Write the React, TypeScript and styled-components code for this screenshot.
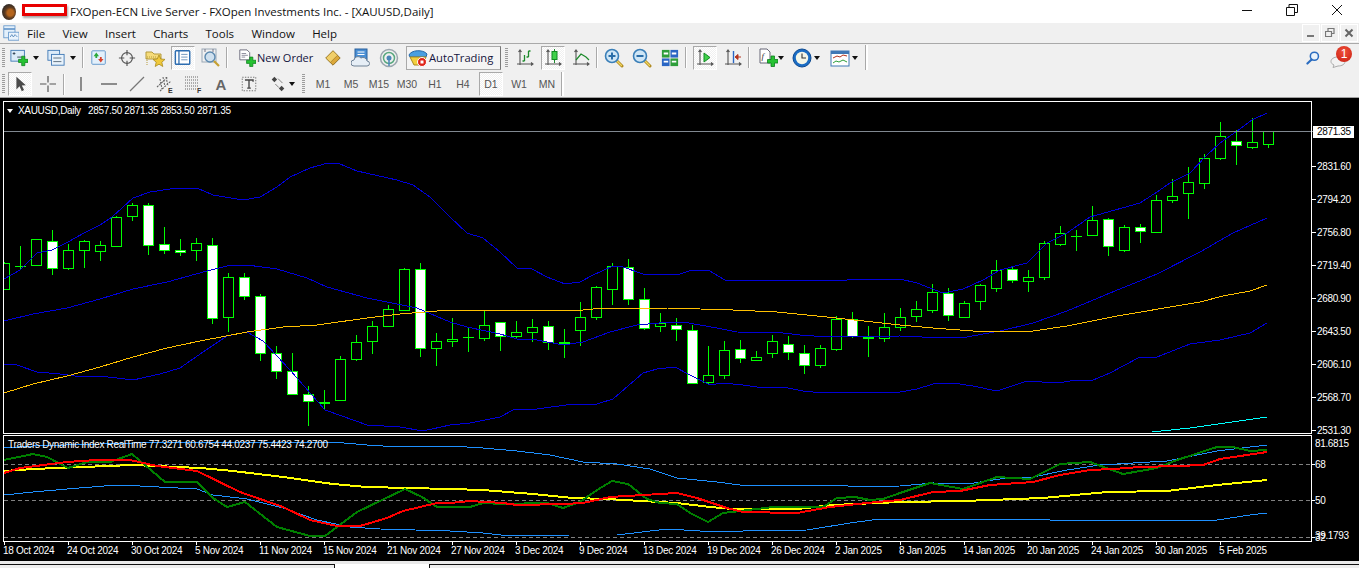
import React from "react";
import styled, { createGlobalStyle } from "styled-components";

const GlobalStyle = createGlobalStyle`
  html, body {
    margin: 0;
    padding: 0;
    overflow: hidden;
    background: #000;
  }
  #root {
    height: 100vh;
  }
`;

/* top, bottom, wick top, wick bottom, white body */
type Candle = [number, number, number, number, boolean];

const CANDLES: Candle[] = [
  [263, 289, 262, 289, false], [266, 266, 246, 269, false], [239, 265, 239, 265, false], [241, 268, 230, 275, true],
  [250, 268, 244, 270, false], [241, 250, 240, 268, false], [245, 251, 241, 261, false], [217, 246, 216, 247, false],
  [205, 216, 203, 221, false], [205, 245, 203, 255, true], [244, 250, 227, 254, true], [250, 252, 239, 256, true],
  [243, 250, 238, 261, false], [245, 318, 238, 324, true], [277, 317, 273, 332, false], [277, 296, 273, 300, true],
  [296, 353, 294, 361, true], [353, 371, 346, 379, true], [371, 394, 353, 394, true], [394, 401, 386, 426, true],
  [402, 402, 390, 410, false], [359, 400, 356, 400, false], [342, 359, 335, 361, false], [326, 341, 321, 354, false],
  [309, 326, 305, 326, false], [269, 310, 268, 311, false], [269, 348, 263, 357, true], [341, 348, 333, 366, false],
  [339, 341, 318, 347, false], [337, 337, 327, 352, false], [325, 338, 311, 341, false], [322, 336, 322, 351, true],
  [332, 336, 321, 339, false], [327, 332, 319, 342, false], [326, 342, 321, 350, true], [342, 342, 329, 358, false],
  [317, 330, 302, 346, false], [287, 317, 286, 320, false], [266, 289, 263, 305, false], [267, 299, 259, 305, true],
  [299, 328, 288, 330, true], [323, 326, 313, 332, false], [325, 329, 318, 341, true], [330, 383, 325, 383, true],
  [375, 382, 346, 385, false], [350, 375, 341, 379, false], [349, 358, 340, 363, true], [357, 360, 351, 361, false],
  [341, 353, 335, 358, false], [344, 352, 336, 360, true], [353, 365, 345, 374, true], [348, 365, 345, 368, false],
  [319, 349, 316, 351, false], [319, 336, 312, 338, true], [337, 338, 326, 357, true], [327, 338, 313, 342, false],
  [317, 327, 308, 331, false], [309, 316, 301, 322, false], [292, 310, 284, 313, false], [293, 315, 288, 321, true],
  [303, 317, 301, 318, false], [285, 301, 284, 310, false], [270, 288, 260, 292, false], [269, 280, 267, 283, true],
  [277, 281, 270, 292, false], [243, 277, 241, 280, false], [233, 244, 226, 246, false], [236, 236, 230, 251, false],
  [220, 235, 206, 235, false], [219, 246, 218, 256, true], [227, 250, 225, 252, false], [227, 231, 224, 243, true],
  [200, 232, 195, 232, false], [196, 200, 179, 203, false], [182, 193, 167, 219, false], [158, 183, 154, 189, false],
  [136, 158, 122, 160, false], [141, 145, 130, 165, true], [142, 147, 118, 149, false], [131, 144, 131, 148, false],
];

const UPPER_BAND =
  "4,279 20,270 37,253 52,250 68,242 84,233 100,225 112,217 133,198 150,192 177,188 197,188 213,195 243,200 260,197 277,187 290,177 310,168 328,163 340,164 357,171 397,180 413,185 430,197 450,217 467,233 483,238 500,252 517,268 532,269 547,277 565,284 580,282 593,275 613,266 623,267 643,274 677,275 692,270 708,270 725,280 747,280 780,280 827,280 847,280 877,279 900,279 917,283 943,293 963,289 983,280 1000,270 1027,263 1047,243 1067,233 1090,217 1140,203 1157,192 1170,183 1190,173 1207,155 1220,143 1237,131 1252,120 1267,113";
const MIDDLE_BAND =
  "4,321 33,314 67,308 100,299 133,289 167,282 207,271 227,266 247,265 277,269 307,278 327,287 367,298 417,308 450,322 467,327 500,334 517,339 537,340 563,345 583,342 610,332 637,325 670,322 683,322 717,328 737,332 783,333 800,335 827,337 900,336 943,338 967,337 1000,331 1033,323 1067,311 1110,293 1157,274 1200,252 1233,233 1267,218";
const LOWER_BAND =
  "4,364 17,365 37,372 60,374 83,377 100,376 133,380 160,374 180,368 203,352 227,336 247,332 263,341 290,370 325,410 367,425 400,427 423,431 450,425 470,423 500,417 515,409 537,409 573,404 597,404 613,399 643,373 657,369 675,367 690,375 710,385 723,383 743,385 757,387 783,387 803,391 813,392 877,392 900,392 917,389 933,384 953,383 973,386 997,391 1027,381 1057,383 1077,380 1093,380 1110,373 1140,357 1157,357 1190,344 1220,340 1250,333 1267,323";
const SLOW_MA =
  "4,393 33,384 67,376 100,367 133,357 167,348 200,341 247,332 283,327 317,325 367,318 400,314 450,310 540,310 583,310 603,308 667,308 733,310 777,312 827,317 900,325 933,328 973,331 1033,331 1067,326 1117,316 1200,302 1223,296 1250,291 1267,285";
const CYAN_LINE = "1152,432 1190,428 1267,417";

const TDI_TOP =
  "4,448 33,446 167,442 333,442 367,445 383,446 450,446 483,448 517,451 550,455 583,462 617,464 650,469 677,478 717,482 740,485 833,485 863,487 900,486 933,483 967,484 1000,479 1033,477 1067,470 1100,465 1167,461 1217,451 1267,445";
const TDI_BOTTOM =
  "4,495 33,492 67,489 117,485 140,486 197,489 213,495 247,499 283,508 317,520 350,527 380,529 450,531 483,533 510,536 570,535 617,535 667,529 700,531 743,531 807,530 850,523 880,519 900,519 957,519 1050,520 1217,520 1250,515 1267,513";
const TDI_YELLOW =
  "4,471 33,469 83,467 133,465 200,468 233,471 283,477 333,484 367,487 450,489 483,490 533,494 573,498 607,499 677,503 710,507 733,509 797,509 833,505 900,502 963,501 1043,498 1107,492 1167,491 1217,485 1267,480";
const TDI_RED =
  "4,473 20,468 67,462 97,460 130,460 157,466 197,471 240,492 283,507 310,520 337,526 360,526 387,518 403,511 437,503 450,503 470,501 503,503 517,505 563,504 583,503 610,497 660,494 677,493 697,498 727,508 743,512 797,513 830,507 867,503 900,500 933,492 960,491 990,485 1033,482 1060,475 1090,470 1113,469 1140,467 1177,466 1203,465 1220,459 1267,452";
const TDI_GREEN =
  "4,460 33,454 47,457 68,468 87,462 110,462 132,454 165,482 197,482 213,498 227,507 245,502 277,527 310,536 325,536 357,512 405,489 422,497 437,507 470,507 483,503 503,504 547,503 563,508 580,502 597,490 612,481 628,484 647,499 660,503 677,504 690,513 708,522 723,513 740,511 773,507 823,507 837,498 855,497 870,500 883,499 900,493 930,483 963,489 997,477 1030,479 1060,464 1090,462 1123,474 1157,468 1177,460 1217,447 1233,447 1250,451 1267,450";

const PRICE_LABELS = [
  ["2831.60", 166], ["2794.20", 199], ["2756.80", 232], ["2719.40", 265], ["2680.90", 298],
  ["2643.50", 331], ["2606.10", 364], ["2568.70", 397], ["2531.30", 430],
] as const;

const DATES = [
  "18 Oct 2024", "24 Oct 2024", "30 Oct 2024", "5 Nov 2024", "11 Nov 2024", "15 Nov 2024", "21 Nov 2024",
  "27 Nov 2024", "3 Dec 2024", "9 Dec 2024", "13 Dec 2024", "19 Dec 2024", "26 Dec 2024", "2 Jan 2025",
  "8 Jan 2025", "14 Jan 2025", "20 Jan 2025", "24 Jan 2025", "30 Jan 2025", "5 Feb 2025",
];

const MENU = ["File", "View", "Insert", "Charts", "Tools", "Window", "Help"];
const PERIODS = ["M1", "M5", "M15", "M30", "H1", "H4", "D1", "W1", "MN"];

const Window = styled.div`
  height: 100vh;
  display: flex;
  flex-direction: column;
  font-family: "Open Sans", "Noto Sans", sans-serif;
  background: #f0f0f0;
`;

const TitleBar = styled.div`
  height: 23px;
  flex: none;
  display: flex;
  align-items: center;
  background: #fff;
  font-size: 11.5px;
  color: #111;
`;

const AppLogo = styled.div`
  width: 14px;
  height: 16px;
  margin: 0 6px 0 2px;
  border-radius: 50%;
  background: radial-gradient(circle at 60% 55%, #b5651d 0 25%, #5b3a20 45%, #2e2a28 75%);
`;

const HiddenName = styled.div`
  width: 39px;
  height: 6px;
  margin-right: 3px;
  margin-top: -3px;
  background: #fff;
  border: 3px solid #e80000;
  box-shadow: 1px 2px 2px rgba(0, 0, 0, 0.35);
`;

const TitleText = styled.span`
  flex: 1;
`;

const CaptionButton = styled.div`
  width: 45px;
  height: 23px;
  margin-top: -3px;
  display: flex;
  align-items: center;
  justify-content: center;
`;

const MenuBar = styled.div`
  height: 20px;
  flex: none;
  display: flex;
  align-items: center;
  gap: 17.3px;
  font-size: 11.5px;
  color: #111;
  background: #f0f0f0;
`;

const MenuIcon = styled.div`
  width: 18px;
  height: 16px;
  margin: 0 -11.3px 0 3px;
`;

const MdiButtons = styled.div`
  margin-left: auto;
  display: flex;
  gap: 1px;
  padding-right: 1px;
`;

const MdiButton = styled.div`
  width: 16px;
  height: 16px;
  display: flex;
  align-items: center;
  justify-content: center;
  background: #f0f0f0;
  border: 1px solid #fff;
`;

const ToolRow = styled.div<{ $top?: boolean }>`
  height: ${(p) => (p.$top ? 28 : 26)}px;
  flex: none;
  display: flex;
  align-items: center;
  box-sizing: border-box;
  background: #f0f0f0;
  border-top: ${(p) => (p.$top ? "1px solid #a9a9a9" : "none")};
`;

const BarEnd = styled.div`
  align-self: stretch;
  width: 2px;
  background: #fff;
  border-left: 1px solid #a9a9a9;
  margin-top: 1px;
  margin-bottom: 1px;
`;

const Grip = styled.div<{ $ml?: number; $mr?: number }>`
  width: 3px;
  height: 20px;
  flex: none;
  margin: 0 ${(p) => p.$mr ?? 2}px 0 ${(p) => p.$ml ?? 2}px;
  background: repeating-linear-gradient(#9c9c9c 0 1px, transparent 1px 2px);
`;

const Separator = styled.div<{ $mr?: number }>`
  width: 2px;
  height: 21px;
  flex: none;
  margin: 0 ${(p) => p.$mr ?? 1}px 0 1px;
  background: #a9a9a9;
  border-right: 1px solid #fff;
  box-sizing: border-box;
`;

const ToolButton = styled.div<{ $active?: boolean }>`
  width: ${(p) => (p.$active ? 24 : 28)}px;
  height: 24px;
  flex: none;
  display: flex;
  align-items: center;
  justify-content: center;
  box-sizing: border-box;
  color: #555;
  font-size: 10.5px;
  font-family: "Liberation Sans", sans-serif;
  ${(p) =>
    p.$active
      ? `border: 1px solid; border-color: #a9a9a9 #fff #fff #a9a9a9;
         background: repeating-conic-gradient(#fff 0 25%, #f0f0f0 0 50%) 0 0 / 2px 2px;
         margin: 0 2px;`
      : ""}
`;

const LetterButton = styled(ToolButton)`
  font-size: 15px;
  font-weight: 700;
  color: #666;
`;

const DropButton = styled.div<{ $pad?: number; $gap?: number; $w?: number }>`
  width: ${(p) => p.$w ?? 37}px;
  height: 24px;
  flex: none;
  display: flex;
  align-items: center;
  gap: ${(p) => p.$gap ?? 5}px;
  padding-left: ${(p) => p.$pad ?? 3}px;
  box-sizing: border-box;
`;

const Caret = styled.span`
  width: 0;
  height: 0;
  flex: none;
  border: 3.5px solid transparent;
  border-top: 4px solid #111;
  border-bottom: none;
`;

const OrderButton = styled.div`
  width: 90px;
  height: 24px;
  flex: none;
  display: flex;
  align-items: center;
  gap: 1px;
  box-sizing: border-box;
  padding-left: 9px;
  font-size: 11px;
  color: #151540;
`;

const AutoTradingButton = styled.div`
  width: 95px;
  height: 24px;
  flex: none;
  display: flex;
  align-items: center;
  gap: 1px;
  box-sizing: border-box;
  padding-left: 1px;
  margin-left: 3px;
  font-size: 11.2px;
  color: #151540;
  background: #f4f4f4;
  border: 1px solid #a9a9a9;
  border-right-color: #777;
`;

const RightTools = styled.div`
  margin-left: auto;
  display: flex;
  align-items: center;
  gap: 10px;
  padding-right: 7px;
`;

const Notify = styled.div`
  position: relative;
  width: 22px;
  height: 20px;
`;

const NotifyBubble = styled.svg`
  position: absolute;
  left: 0;
  bottom: 0;
`;

const Badge = styled.div`
  position: absolute;
  right: 0;
  top: -2px;
  width: 16px;
  height: 16px;
  border-radius: 50%;
  background: radial-gradient(circle at 50% 35%, #f0503a, #c81e10);
  color: #fff;
  font-size: 12px;
  line-height: 16px;
  text-align: center;
  font-family: "Liberation Sans", sans-serif;
`;

const Workspace = styled.div`
  flex: 1;
  min-height: 0;
  display: flex;
  flex-direction: column;
  background: #000;
  border-top: 1px solid #a0a0a0;
  font-family: "Liberation Sans", sans-serif;
  padding-top: 3px;
`;

const Pane = styled.div<{ $gap?: number }>`
  position: relative;
  flex: none;
  margin-top: ${(p) => p.$gap ?? 0}px;
  svg {
    display: block;
    overflow: visible;
  }
  text {
    fill: #fff;
    font-size: 10px;
    letter-spacing: -0.35px;
    font-family: "Liberation Sans", sans-serif;
  }
  text.current {
    fill: #000;
  }
`;

const PaneCaption = styled.div<{ $left: number }>`
  position: absolute;
  top: 4px;
  left: ${(p) => p.$left}px;
  display: flex;
  align-items: center;
  gap: 5px;
  color: #fff;
  font-size: 10px;
  letter-spacing: -0.33px;
  line-height: 12px;
  white-space: pre;
`;

const CaptionArrow = styled.span`
  width: 0;
  height: 0;
  border: 3.5px solid transparent;
  border-top: 4px solid #fff;
  border-bottom: none;
`;

const DateAxis = styled.div`
  flex: none;
  height: 19px;
  display: flex;
  padding-left: 3px;
  color: #fff;
  font-size: 10px;
  letter-spacing: -0.28px;
  line-height: 16px;
`;

const DateLabel = styled.div`
  position: relative;
  width: 64px;
  flex: none;
  white-space: nowrap;
  padding-top: 1px;
  &::before {
    content: "";
    position: absolute;
    left: 1px;
    top: 0;
    width: 1px;
    height: 3px;
    background: #fff;
  }
`;

const TabStrip = styled.div`
  height: 7px;
  flex: none;
  display: flex;
  padding-top: 3px;
  box-sizing: border-box;
  background: #e9e9e9;
`;

const Tab = styled.div<{ $w?: number; $open?: boolean }>`
  width: ${(p) => (p.$w ? `${p.$w}px` : "auto")};
  flex: ${(p) => (p.$w ? "none" : "1")};
  background: ${(p) => (p.$open ? "#fff" : "#eee")};
  border-top: ${(p) => (p.$open ? "none" : "1px solid #111")};
  border-left: ${(p) => (p.$w || p.$open ? "none" : "1px solid #111")};
  border-right: ${(p) => (p.$w && !p.$open ? "1px solid #111" : "none")};
`;

const IconSvg = styled.svg`
  flex: none;
`;

const Icon: React.FC<{ size?: number; children: React.ReactNode }> = ({ size = 20, children }) => (
  <IconSvg width={size} height={size} viewBox="0 0 20 20" fill="none">
    {children}
  </IconSvg>
);

const GreenPlus = ({ x = 0, y = 0 }: { x?: number; y?: number }) => (
  <path
    transform={`translate(${x} ${y})`}
    d="M9.5 11.5h3.5V8h3.5v3.5H20V15h-3.5v3.5H13V15H9.5z"
    fill="#26c232"
    stroke="#0b7c1c"
    strokeWidth="0.8"
  />
);

const Axes = () => (
  <path d="M5 2v15M2 16h16M3.5 4L5 2l1.5 2M16 14.5l2 1.5-2 1.5" stroke="#555" strokeWidth="1.1" />
);

const Magnifier = ({ minus, plus }: { minus?: boolean; plus?: boolean }) => (
  <>
    <path d="M12 12l6 6" stroke="#b08a20" strokeWidth="3" strokeLinecap="round" />
    <path d="M12.5 12.5l5 5" stroke="#f2d860" strokeWidth="1.2" strokeLinecap="round" />
    <circle cx="8" cy="8" r="6.5" fill="#cfe6f6" stroke="#3a7fb8" strokeWidth="1.6" />
    {(minus || plus) && <path d="M4.5 8h7" stroke="#2b6ea8" strokeWidth="2" />}
    {plus && <path d="M8 4.5v7" stroke="#2b6ea8" strokeWidth="2" />}
  </>
);

const App: React.FC = () => {
  return (
    <Window>
      <GlobalStyle />
      <TitleBar>
        <AppLogo />
        <HiddenName />
        <TitleText>FXOpen-ECN Live Server - FXOpen Investments Inc. - [XAUUSD,Daily]</TitleText>
        <CaptionButton>
          <svg width="12" height="12"><path d="M1 6.5h10" stroke="#111" /></svg>
        </CaptionButton>
        <CaptionButton>
          <svg width="12" height="12"><path d="M.5 3.5h8v8h-8zM3 3.5V.5h8.5v8H8.5" stroke="#111" fill="none" /></svg>
        </CaptionButton>
        <CaptionButton>
          <svg width="12" height="12"><path d="M1 1l10 10M11 1L1 11" stroke="#111" /></svg>
        </CaptionButton>
      </TitleBar>

      <MenuBar>
        <MenuIcon>
          <Icon size={16}>
            <rect x="1" y="1" width="14" height="15" fill="#e4f0fb" stroke="#5d92c8" />
            <path d="M1 5h14" stroke="#5d92c8" strokeWidth="2" />
            <rect x="7" y="9" width="13" height="10" fill="#eaf3fc" stroke="#5d92c8" />
            <path d="M9 15l2-3 2 3 2-3 3 3" stroke="#4a7fb5" />
          </Icon>
        </MenuIcon>
        {MENU.map((item) => (
          <span key={item}>{item}</span>
        ))}
        <MdiButtons>
          <MdiButton>
            <svg width="10" height="10"><path d="M1 8h7" stroke="#777" strokeWidth="2" /></svg>
          </MdiButton>
          <MdiButton>
            <svg width="10" height="10"><path d="M.5 3.5h6v5h-6zM3 3V.5h6v5H7" stroke="#777" fill="none" strokeWidth="1.2" /></svg>
          </MdiButton>
          <MdiButton>
            <svg width="10" height="10"><path d="M1.5 1.5l7 7M8.5 1.5l-7 7" stroke="#666" strokeWidth="2" /></svg>
          </MdiButton>
        </MdiButtons>
      </MenuBar>

      <ToolRow $top>
        <Grip />
        <DropButton>
          <Icon size={18}>
            <rect x="1" y="1.5" width="15" height="12" fill="#dcebf9" stroke="#3f78b5" />
            <path d="M3 5h3M4.5 3.5v3M8 9h5" stroke="#345" />
            <GreenPlus />
          </Icon>
          <Caret />
        </DropButton>
        <DropButton>
          <Icon size={18}>
            <rect x="1" y="1.5" width="13" height="11" fill="#dcebf9" stroke="#3f78b5" />
            <rect x="5" y="6" width="14" height="12" fill="#e8f2fb" stroke="#3f78b5" />
            <path d="M7 10h9M7 14h9" stroke="#567" />
          </Icon>
          <Caret />
        </DropButton>
        <Separator />
        <ToolButton>
          <Icon size={18}>
            <rect x="2" y="2" width="15" height="15" rx="1" fill="#e3f0fb" stroke="#5b93c9" />
            <path d="M7 4l3 4H8v2H6V8H4z" fill="#2aa83a" />
            <path d="M12 15l-3-4h2V9h2v2h2z" fill="#d8402a" />
          </Icon>
        </ToolButton>
        <ToolButton>
          <Icon size={18}>
            <circle cx="10" cy="10" r="6" stroke="#555" strokeWidth="1.3" />
            <path d="M10 1v6M10 13v6M1 10h6M13 10h6" stroke="#555" strokeWidth="1.3" />
          </Icon>
        </ToolButton>
        <ToolButton>
          <Icon>
            <path d="M1 4h6l2 2h7v5H1z" fill="#f6dc7a" stroke="#b49a3c" />
            <path d="M2 17l0-8h10" stroke="#b49a3c" strokeDasharray="1 1" />
            <path d="M14 7l1.8 4 4.2.4-3.2 2.8 1 4.3L14 16.2l-3.8 2.3 1-4.3L8 11.4l4.2-.4z" fill="#f0c93c" stroke="#a98a1e" strokeWidth="0.8" />
          </Icon>
        </ToolButton>
        <ToolButton $active>
          <Icon size={18}>
            <rect x="1.5" y="2" width="16" height="15" rx="1" fill="#fff" stroke="#2c6cb0" strokeWidth="1.6" />
            <path d="M5.5 2v15" stroke="#2c6cb0" strokeWidth="1.4" />
            <path d="M8 6h7M8 9h7M8 12h7" stroke="#6a90b8" />
          </Icon>
        </ToolButton>
        <ToolButton>
          <Icon>
            <rect x="1" y="1" width="14" height="13" fill="#f0f0f0" stroke="#9aa8b6" />
            <path d="M4 1v3M12 1v3" stroke="#778" />
            <circle cx="9" cy="9" r="5" fill="#cfe0ee" stroke="#5b88ae" strokeWidth="1.4" />
            <path d="M13 13l5 5" stroke="#c6a032" strokeWidth="2.2" />
          </Icon>
        </ToolButton>
        <Separator />
        <OrderButton>
          <Icon size={18}>
            <path d="M2 1h8l3 3v8H2z" fill="#fff" stroke="#667" />
            <path d="M4 5h5M4 7h7M4 9h4" stroke="#889" />
            <GreenPlus y={1} />
          </Icon>
          New Order
        </OrderButton>
        <ToolButton>
          <Icon size={18}>
            <path d="M2 10l8-8 8 8-8 8z" fill="#dca83a" stroke="#8a6a1e" />
            <path d="M2 10l8-8 5 5-8 8z" fill="#f1cf6a" stroke="#8a6a1e" strokeWidth="0.6" />
          </Icon>
        </ToolButton>
        <ToolButton>
          <Icon>
            <rect x="4" y="1" width="12" height="11" fill="#4a8fd4" stroke="#2a609c" />
            <path d="M6.5 4h7M6.5 6.5h7" stroke="#fff" />
            <path d="M3 18a3 3 0 0 1 0-6 4 4 0 0 1 7-2 4 4 0 0 1 6 3 2.5 2.5 0 0 1 0 5z" fill="#e6eef6" stroke="#6f8296" />
          </Icon>
        </ToolButton>
        <ToolButton>
          <Icon>
            <circle cx="10" cy="10" r="8.5" stroke="#9aa6ae" strokeWidth="1.5" />
            <circle cx="10" cy="10" r="5.5" stroke="#5aa880" strokeWidth="1.5" />
            <circle cx="10" cy="10" r="2.5" fill="#4a86b8" />
            <path d="M10 11v7" stroke="#4a86b8" strokeWidth="1.5" />
          </Icon>
        </ToolButton>
        <AutoTradingButton>
          <Icon>
            <path d="M1 7c2-5 14-6 18-1l-1 3H2z" fill="#4a9fe0" stroke="#2668a8" />
            <path d="M2 9h16l-3 8H6z" fill="#f3cf3e" stroke="#a98a1e" />
            <circle cx="14" cy="14" r="4.5" fill="#e02418" stroke="#fff" />
            <rect x="12.5" y="12.5" width="3" height="3" fill="#fff" />
          </Icon>
          AutoTrading
        </AutoTradingButton>
        <Grip $ml={4} $mr={3} />
        <ToolButton>
          <Icon>
            <Axes />
            <path d="M9.5 13V7M9.5 13h-2M13.5 9V3M13.5 9h-2M13.5 3h2" stroke="#1b8a2a" strokeWidth="1.3" />
          </Icon>
        </ToolButton>
        <ToolButton $active>
          <Icon>
            <Axes />
            <path d="M11.5 1v14" stroke="#1b8a2a" />
            <rect x="9" y="3.5" width="5" height="8" fill="#3fd14a" stroke="#118a22" />
          </Icon>
        </ToolButton>
        <ToolButton>
          <Icon>
            <Axes />
            <path d="M5 12l5-6 5 3 3 3" stroke="#1b8a2a" strokeWidth="1.2" />
          </Icon>
        </ToolButton>
        <Separator $mr={2} />
        <ToolButton>
          <Icon>
            <Magnifier plus />
          </Icon>
        </ToolButton>
        <ToolButton>
          <Icon>
            <Magnifier minus />
          </Icon>
        </ToolButton>
        <ToolButton>
          <Icon size={18}>
            <rect x="1" y="1" width="8.5" height="8.5" fill="#2e9e3a" />
            <rect x="10.5" y="1" width="8.5" height="8.5" fill="#2a66c4" />
            <rect x="1" y="10.5" width="8.5" height="8.5" fill="#2a66c4" />
            <rect x="10.5" y="10.5" width="8.5" height="8.5" fill="#2e9e3a" />
            <path d="M3 5h5M12 5h5M3 14h5M12 14h5" stroke="#fff" strokeWidth="2" />
          </Icon>
        </ToolButton>
        <Separator $mr={4} />
        <ToolButton $active>
          <Icon>
            <Axes />
            <path d="M9 5l6 4.5-6 4.5z" fill="#3fd14a" stroke="#118a22" />
          </Icon>
        </ToolButton>
        <ToolButton>
          <Icon>
            <Axes />
            <path d="M10.5 3v12" stroke="#2a66c4" strokeWidth="1.4" />
            <path d="M18 9h-4M12 9l3-2.5v5z" fill="#b4341e" stroke="#b4341e" />
          </Icon>
        </ToolButton>
        <Separator />
        <DropButton $pad={7} $gap={0}>
          <Icon>
            <path d="M2 1h7l3 3v11H2z" fill="#fff" stroke="#667" />
            <text x="3.5" y="11" fontSize="9" fontFamily="Liberation Serif" fontStyle="italic" fill="#333">f</text>
            <GreenPlus />
          </Icon>
          <Caret />
        </DropButton>
        <DropButton $pad={4} $gap={2}>
          <Icon>
            <circle cx="10" cy="10" r="9" fill="#1a6cc4" stroke="#0e4a90" />
            <circle cx="10" cy="10" r="6.2" fill="#f4f6e8" />
            <path d="M10 5.5V10h4" stroke="#333" strokeWidth="1.1" />
          </Icon>
          <Caret />
        </DropButton>
        <DropButton $pad={5} $gap={2} $w={40}>
          <Icon>
            <rect x="1" y="3" width="18" height="15" fill="#fff" stroke="#3f78b5" />
            <path d="M1 4.5h18" stroke="#3f78b5" strokeWidth="3" />
            <path d="M3 10l4-2 3 1 3-2 4 1" stroke="#b4341e" />
            <path d="M3 15l3-2 3 1 4-2 4 2" stroke="#2e9e3a" />
          </Icon>
          <Caret />
        </DropButton>
        <BarEnd />
        <RightTools>
          <Icon size={14}>
            <circle cx="12" cy="7.5" r="5.8" fill="#eaf3fb" stroke="#2a6cc0" strokeWidth="2.2" />
            <path d="M8 12l-6 6" stroke="#2a6cc0" strokeWidth="3" strokeLinecap="round" />
          </Icon>
          <Notify>
            <NotifyBubble width="16" height="12" viewBox="0 0 16 12">
              <path d="M8 1c4 0 7 1.8 7 4.5S12 10 8 10L3 11.5 4 9C2 8 1 7 1 5.5 1 2.8 4 1 8 1z" fill="#f2f2f2" stroke="#aaa" />
            </NotifyBubble>
            <Badge>1</Badge>
          </Notify>
        </RightTools>
      </ToolRow>

      <ToolRow>
        <Grip $mr={1} />
        <ToolButton $active>
          <Icon size={18}>
            <path d="M6 2l0 14 3.5-3.5L12 18l2.5-1.2-2.500-5 4.500-.3z" fill="#4a4a4a" />
          </Icon>
        </ToolButton>
        <ToolButton>
          <Icon>
            <path d="M10 2v6.5M10 11.5V18M2 10h6.5M11.5 10H18" stroke="#555" strokeWidth="1.2" />
          </Icon>
        </ToolButton>
        <Separator $mr={2} />
        <ToolButton>
          <Icon>
            <path d="M10 3v14" stroke="#555" strokeWidth="1.3" />
          </Icon>
        </ToolButton>
        <ToolButton>
          <Icon>
            <path d="M2 10h16" stroke="#555" strokeWidth="1.3" />
          </Icon>
        </ToolButton>
        <ToolButton>
          <Icon>
            <path d="M3 17L17 3" stroke="#777" strokeWidth="1.3" />
          </Icon>
        </ToolButton>
        <ToolButton>
          <Icon>
            <path d="M2 13L13 3M5 17L16 7M5 5l2 10M8 3l2 10M11 3l2 9" stroke="#666" strokeWidth="1.1" strokeDasharray="2 1" />
            <text x="13" y="19" fontSize="7" fontWeight="bold" fill="#333" fontFamily="Liberation Sans">E</text>
          </Icon>
        </ToolButton>
        <ToolButton>
          <Icon>
            <path d="M2 3h14M2 6h14M2 9h14M2 12h14M2 15h11" stroke="#666" strokeDasharray="1 1" />
            <text x="14" y="19" fontSize="7" fontWeight="bold" fill="#333" fontFamily="Liberation Sans">F</text>
          </Icon>
        </ToolButton>
        <LetterButton>A</LetterButton>
        <ToolButton>
          <Icon size={18}>
            <rect x="2.5" y="2.5" width="15" height="15" stroke="#666" strokeDasharray="1.5 1.5" />
            <path d="M5.5 5.5h9v2M10 5.5v9M8 14.5h4" stroke="#444" strokeWidth="1.5" />
          </Icon>
        </ToolButton>
        <DropButton $pad={6} $gap={2}>
          <Icon size={18}>
            <path d="M3 5l3-3 3 3-3 3z" fill="#444" />
            <path d="M11 15l3-3 3 3-3 3z" fill="#444" />
            <path d="M10 4l5 5M7 10l4 4" stroke="#777" />
          </Icon>
          <Caret />
        </DropButton>
        <Grip $mr={4} />
        {PERIODS.map((period) => (
          <ToolButton key={period} $active={period === "D1"}>
            {period}
          </ToolButton>
        ))}
        <BarEnd />
      </ToolRow>

      <Workspace>
        <Pane>
          <svg width="1359" height="333" viewBox="0 101 1359 333" shapeRendering="crispEdges">
            <defs>
              <clipPath id="plot">
                <rect x="4" y="102" width="1307" height="331" />
              </clipPath>
            </defs>
            <g clipPath="url(#plot)">
              {CANDLES.map(([top, bottom, wickTop, wickBottom, white], i) => {
                const x = 4 + i * 16;
                const flat = top === bottom;
                return (
                  <g key={i} stroke="#00ff00">
                    <path d={`M${x + 0.5} ${wickTop}V${wickBottom}`} />
                    {flat ? (
                      <path d={`M${x - 5} ${top + 0.5}H${x + 6}`} strokeWidth={i === 20 || i === 35 ? 2 : 1} />
                    ) : (
                      <rect x={x - 4.5} y={top + 0.5} width={10} height={bottom - top} fill={white ? "#fff" : "#000"} />
                    )}
                  </g>
                );
              })}
              <polyline points={UPPER_BAND} fill="none" stroke="#0000d8" />
              <polyline points={MIDDLE_BAND} fill="none" stroke="#0000d8" />
              <polyline points={LOWER_BAND} fill="none" stroke="#0000d8" />
              <polyline points={SLOW_MA} fill="none" stroke="#ffc000" />
              <polyline points={CYAN_LINE} fill="none" stroke="#00ffff" />
              <path d="M4 131.5H1311" stroke="#808890" />
            </g>
            <rect x="3.5" y="101.5" width="1308" height="332" fill="none" stroke="#fff" />
            {PRICE_LABELS.map(([label, y]) => (
              <g key={label}>
                <path d={`M1312 ${y + 0.5}h4`} stroke="#fff" />
                <text x="1317" y={y + 4} shapeRendering="auto">{label}</text>
              </g>
            ))}
            <path d="M1312 131.5h2" stroke="#808890" />
            <rect x="1313" y="126" width="41" height="12" fill="#fff" />
            <text className="current" x="1317" y="135">2871.35</text>
          </svg>
          <PaneCaption $left={7}>
            <CaptionArrow />
            <span>XAUUSD,Daily   2857.50 2871.35 2853.50 2871.35</span>
          </PaneCaption>
        </Pane>

        <Pane $gap={1}>
          <svg width="1359" height="107" viewBox="0 435 1359 107" shapeRendering="crispEdges">
            <defs>
              <clipPath id="tdi">
                <rect x="4" y="436" width="1307" height="105" />
              </clipPath>
            </defs>
            <g clipPath="url(#tdi)">
              <path d="M4 464.5H1311M4 500.5H1311M4 537.5H1311" stroke="#808080" strokeDasharray="4 3" />
              <polyline points={TDI_TOP} fill="none" stroke="#1e90ff" />
              <polyline points={TDI_BOTTOM} fill="none" stroke="#1e90ff" />
              <polyline points={TDI_YELLOW} fill="none" stroke="#ffff00" strokeWidth="2" />
              <polyline points={TDI_GREEN} fill="none" stroke="#008000" strokeWidth="2" />
              <polyline points={TDI_RED} fill="none" stroke="#ff0000" strokeWidth="2" />
            </g>
            <rect x="3.5" y="435.5" width="1308" height="106" fill="none" stroke="#fff" />
            <path d="M1312 464.5h3M1312 500.5h3M1312 537.5h3" stroke="#fff" />
            <text x="1315" y="447">81.6815</text>
            <text x="1315" y="468">68</text>
            <text x="1315" y="504">50</text>
            <text x="1315" y="541">32</text>
            <text x="1315" y="539">39.1793</text>
          </svg>
          <PaneCaption $left={8}>
            <span>Traders Dynamic Index RealTime 77.3271 60.6754 44.0237 75.4423 74.2700</span>
          </PaneCaption>
        </Pane>

        <DateAxis>
          {DATES.map((date) => (
            <DateLabel key={date}>{date}</DateLabel>
          ))}
        </DateAxis>
      </Workspace>

      <TabStrip>
        <Tab $w={334} />
        <Tab $w={94} $open />
        <Tab />
      </TabStrip>
    </Window>
  );
};

export default App;
